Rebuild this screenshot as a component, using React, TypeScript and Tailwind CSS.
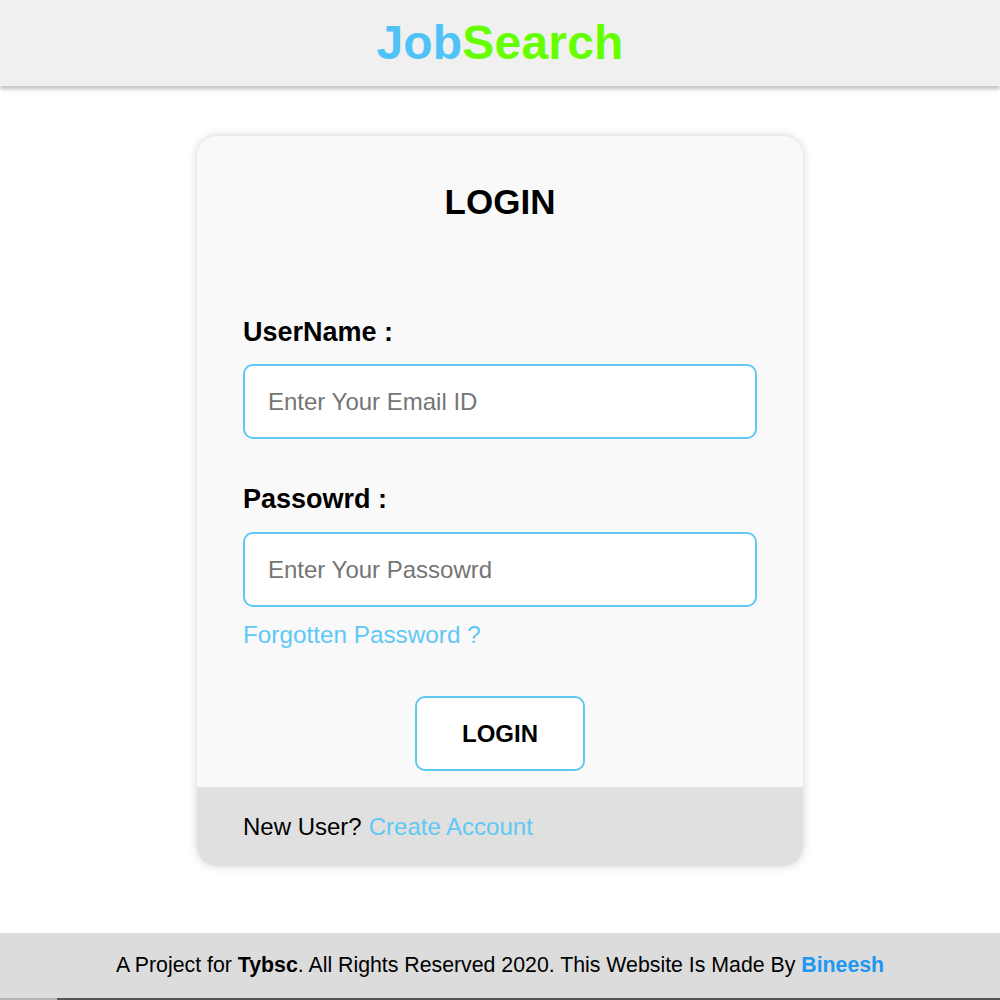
export default function App() {
    return (
        <div className="min-h-[1000px] flex flex-col bg-white font-['Liberation_Sans',Arial,sans-serif] text-black">
            {/* Header */}
            <header className="h-[86px] bg-[#f0f0f0] shadow-[0_3px_4px_rgba(0,0,0,0.25)] flex items-center justify-center relative z-10">
                <h1 className="text-[48px] font-bold leading-none tracking-[0.2px]">
                    <span className="text-[#4fc3f7]">Job</span>
                    <span className="text-[#66ff00]">Search</span>
                </h1>
            </header>

            {/* Main */}
            <main className="flex-1 flex items-start justify-center pt-[50px] pb-[67px]">
                <div className="w-[606px] rounded-[20px] overflow-hidden bg-[#f9f9f9] shadow-[0_0_10px_rgba(0,0,0,0.18)] flex flex-col">
                    <div className="px-[46px] pt-[46px] pb-[16px] flex flex-col">
                        <h2 className="text-center text-[35px] font-bold leading-[40px]">
                            LOGIN
                        </h2>

                        <label className="mt-[95px] text-[27px] font-bold leading-[30px]">
                            UserName :
                        </label>
                        <input
                            type="text"
                            placeholder="Enter Your Email ID"
                            className="mt-[17px] h-[75px] w-full rounded-[10px] border-2 border-[#5fc8f5] bg-white px-[23px] text-[24px] placeholder:text-[#757575] outline-none"
                        />

                        <label className="mt-[45px] text-[27px] font-bold leading-[30px]">
                            Passowrd :
                        </label>
                        <input
                            type="password"
                            placeholder="Enter Your Passowrd"
                            className="mt-[18px] h-[75px] w-full rounded-[10px] border-2 border-[#5fc8f5] bg-white px-[23px] text-[24px] placeholder:text-[#757575] outline-none"
                        />
                        <a className="mt-[14px] text-[24.3px] leading-[28px] text-[#5fc8f5]">
                            Forgotten Password ?
                        </a>

                        <div className="mt-[47px] flex justify-center">
                            <button className="h-[75px] w-[170px] rounded-[10px] border-2 border-[#5fc8f5] bg-white text-[24px] font-bold">
                                LOGIN
                            </button>
                        </div>
                    </div>

                    {/* Card footer */}
                    <div className="h-[79px] bg-[#e0e0e0] px-[46px] flex items-center text-[24px]">
                        <span>New User?</span>
                        <a className="ml-[7px] text-[#5fc8f5]">Create Account</a>
                    </div>
                </div>
            </main>

            {/* Footer */}
            <footer className="h-[67px] bg-[#dcdcdc] flex flex-col">
                <div className="flex-1 flex items-center justify-center text-[21.3px]">
                    <p>
                        A Project for <b>Tybsc</b>. All Rights Reserved 2020. This
                        Website Is Made By{" "}
                        <b className="text-[#2196f3]">Bineesh</b>
                    </p>
                </div>
                <div className="h-[2px] flex">
                    <div className="w-[57px] bg-[#b5b5b5]" />
                    <div className="flex-1 bg-[#555]" />
                </div>
            </footer>
        </div>
    );
}
